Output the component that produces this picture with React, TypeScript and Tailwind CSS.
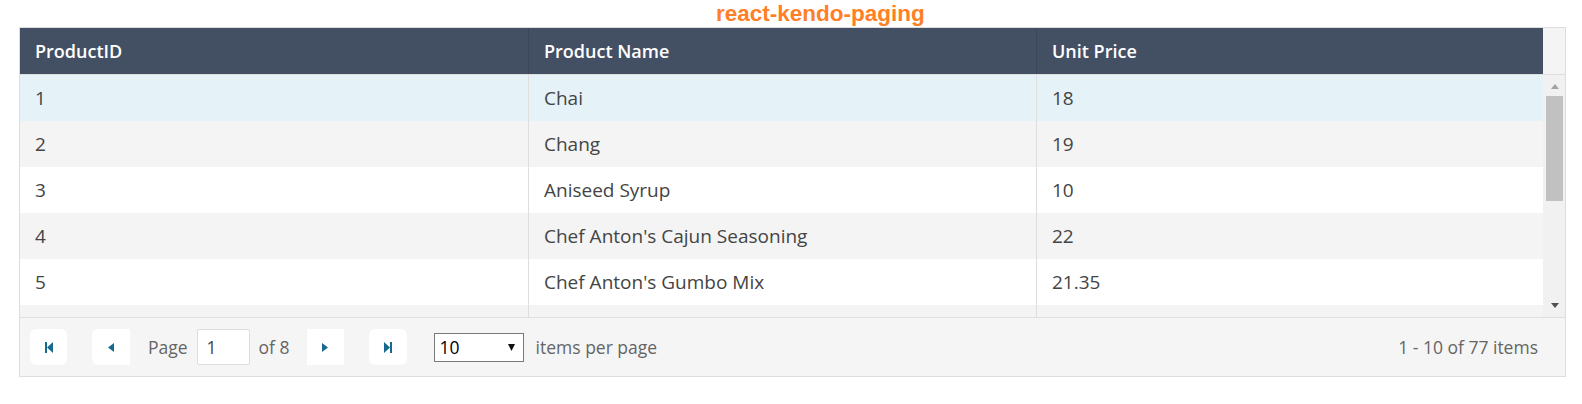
import React from 'react';

const rows = [
  { id: 1, name: 'Chai', price: '18' },
  { id: 2, name: 'Chang', price: '19' },
  { id: 3, name: 'Aniseed Syrup', price: '10' },
  { id: 4, name: "Chef Anton's Cajun Seasoning", price: '22' },
  { id: 5, name: "Chef Anton's Gumbo Mix", price: '21.35' },
];

const teal = '#17698e';

function PagerIcon({ kind }: { kind: 'first' | 'prev' | 'next' | 'last' }) {
  return (
    <svg width="10" height="11" viewBox="0 0 10 11">
      {kind === 'first' && (
        <>
          <rect x="1" y="0" width="2" height="11" fill={teal} />
          <polygon points="9,0 9,11 3,5.5" fill={teal} />
        </>
      )}
      {kind === 'prev' && <polygon points="8,1 8,10 2,5.5" fill={teal} />}
      {kind === 'next' && <polygon points="2,1 2,10 8,5.5" fill={teal} />}
      {kind === 'last' && (
        <>
          <polygon points="1,0 1,11 7,5.5" fill={teal} />
          <rect x="7" y="0" width="2" height="11" fill={teal} />
        </>
      )}
    </svg>
  );
}

export default function App() {
  return (
    <div className="w-full h-[404px] bg-white" style={{ fontFamily: '"Open Sans", sans-serif' }}>
      <div className="h-[27px] pl-[716px] pt-[1px]">
        <span className="text-[22.5px] leading-[25px] font-bold text-[#ff7f26]" style={{ fontFamily: '"Liberation Sans", Arial, sans-serif' }}>
          react-kendo-paging
        </span>
      </div>

      <div className="ml-[19px] w-[1547px] border border-[#dedede]">
        {/* header */}
        <div className="flex h-[47px] border-b border-[#dedede]">
          <div className="flex w-[1523px] bg-[#435064] text-white text-[18px] font-semibold">
            <div className="w-[508px] pl-[15px] flex items-center">ProductID</div>
            <div className="w-[508px] pl-[15px] flex items-center border-l border-[#3b4659]">Product Name</div>
            <div className="flex-1 pl-[15px] flex items-center border-l border-[#3b4659]">Unit Price</div>
          </div>
          <div className="flex-1 bg-[#f4f4f4]" />
        </div>

        {/* body */}
        <div className="flex h-[242px]">
          <div className="w-[1523px] overflow-hidden text-[19px] text-[#444]">
            {rows.map((r, i) => (
              <div
                key={r.id}
                className={`flex h-[46px] ${i === 0 ? 'bg-[#e5f3f9]' : i % 2 === 1 ? 'bg-[#f4f4f4]' : 'bg-white'}`}
              >
                <div className="w-[508px] pl-[15px] flex items-center">{r.id}</div>
                <div className="w-[508px] pl-[15px] flex items-center border-l border-[#dedede]">{r.name}</div>
                <div className="flex-1 pl-[15px] flex items-center border-l border-[#dedede]">{r.price}</div>
              </div>
            ))}
            <div className="flex h-[12px] bg-[#f4f4f4]">
              <div className="w-[508px]" />
              <div className="w-[508px] border-l border-[#dedede]" />
              <div className="flex-1 border-l border-[#dedede]" />
            </div>
          </div>
          <div className="flex-1 bg-[#f1f1f1] flex flex-col pl-[3px]">
            <div className="h-[21px] flex items-center justify-center pr-[1px] pt-[1px]">
              <svg width="8" height="5" viewBox="0 0 8 5">
                <polygon points="0,5 8,5 4,0" fill="#a3a3a3" />
              </svg>
            </div>
            <div className="w-[17px] h-[105px] bg-[#c1c1c1]" />
            <div className="flex-1 flex items-end justify-center pb-[9px] pr-[1px]">
              <svg width="8" height="5" viewBox="0 0 8 5">
                <polygon points="0,0 8,0 4,5" fill="#505050" />
              </svg>
            </div>
          </div>
        </div>

        {/* pager */}
        <div className="flex items-center h-[59px] border-t border-[#dedede] bg-[#f5f5f5] pl-[10px] pr-[27px] text-[17.5px] text-[#656565]">
          <button className="w-[37px] h-[36px] bg-white rounded-[6px] flex items-center justify-center">
            <PagerIcon kind="first" />
          </button>
          <button className="ml-[25px] w-[38px] h-[36px] bg-white rounded-l-[6px] flex items-center justify-center">
            <PagerIcon kind="prev" />
          </button>
          <span className="ml-[18px]">Page</span>
          <div className="ml-[9px] w-[53px] h-[36px] bg-white border border-[#dddddd] rounded-[2px] flex items-center pl-[9px] text-[#444]">
            1
          </div>
          <span className="ml-[9px]">of 8</span>
          <button className="ml-[17px] w-[37px] h-[36px] bg-white flex items-center justify-center">
            <PagerIcon kind="next" />
          </button>
          <button className="ml-[25px] w-[38px] h-[36px] bg-white rounded-[6px] flex items-center justify-center">
            <PagerIcon kind="last" />
          </button>
          <div className="ml-[27px] w-[90px] h-[29px] bg-white border border-[#7a7a7a] flex items-center justify-between pl-[5px] pr-[8px] text-black">
            <span>10</span>
            <svg width="7" height="7" viewBox="0 0 7 7">
              <polygon points="0,0 7,0 3.5,7" fill="#111" />
            </svg>
          </div>
          <span className="ml-[12px]">items per page</span>
          <span className="ml-auto">1 - 10 of 77 items</span>
        </div>
      </div>
    </div>
  );
}
